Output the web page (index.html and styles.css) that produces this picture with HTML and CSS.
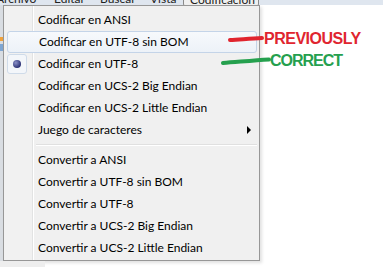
FILE: index.html
```html
<!DOCTYPE html>
<html>
<head>
  <link rel="stylesheet" href="styles.css">
</head>
<body>

  <div class="menubar">
    <span class="bar-item file">Archivo</span>
    <span class="bar-item edit">Editar</span>
    <span class="bar-item search">Buscar</span>
    <span class="bar-item view">Vista</span>
    <span class="bar-item active">Codificación</span>
  </div>

  <div class="workspace">
    <div class="side-strip">
      <div class="tool orange"></div>
      <div class="tool blue"></div>
    </div>

    <div class="menu">
      <div class="menu-item">Codificar en ANSI</div>
      <div class="menu-item hover">Codificar en UTF-8 sin BOM</div>
      <div class="menu-item checked">
        <span class="radio"><span class="dot"></span></span>
        Codificar en UTF-8
      </div>
      <div class="menu-item">Codificar en UCS-2 Big Endian</div>
      <div class="menu-item">Codificar en UCS-2 Little Endian</div>
      <div class="menu-item submenu">Juego de caracteres <span class="arrow"></span></div>
      <div class="separator"></div>
      <div class="menu-item">Convertir a ANSI</div>
      <div class="menu-item">Convertir a UTF-8 sin BOM</div>
      <div class="menu-item">Convertir a UTF-8</div>
      <div class="menu-item">Convertir a UCS-2 Big Endian</div>
      <div class="menu-item">Convertir a UCS-2 Little Endian</div>
    </div>
  </div>

  <div class="footer">
    <div class="footer-left"></div>
  </div>

  <!-- hand drawn notes over the screenshot -->
  <div class="note note-red">
    <svg width="36" height="8" viewBox="0 0 36 8">
      <path d="M2 5 C 12 4.5, 22 3.5, 34 3" stroke="#e0252f" stroke-width="4" stroke-linecap="round" fill="none"/>
    </svg>
    <span class="note-text">PREVIOUSLY</span>
  </div>
  <div class="note note-green">
    <svg width="50" height="8" viewBox="0 0 50 8">
      <path d="M2 6 C 16 5, 32 3.5, 48 2.5" stroke="#25a04e" stroke-width="4" stroke-linecap="round" fill="none"/>
    </svg>
    <span class="note-text">CORRECT</span>
  </div>

</body>
</html>
```

FILE: styles.css
```css
body {
  margin: 0;
  width: 383px;
  height: 267px;
  background: #ffffff;
  font-family: Lato, 'Liberation Sans', sans-serif;
  font-size: 12px;
  color: #000;
  position: relative;
  overflow: hidden;
}

.menubar {
  height: 5px;
  overflow: hidden;
  background: #dfe6ef;
  display: flex;
  white-space: nowrap;
}

.bar-item {
  flex: none;
  margin-top: -9px;
  line-height: 16px;
  color: #222;
}

.bar-item.file {
  margin-left: -4px;
  width: 58px;
}

.bar-item.edit {
  width: 46px;
}

.bar-item.search {
  width: 50px;
}

.bar-item.view {
  width: 33px;
}

.bar-item.active {
  box-sizing: border-box;
  width: 76px;
  padding: 0 6px;
  height: 16px;
  border: 1px solid #8a8a8a;
  border-radius: 3px;
  background: #f0f0f0;
}

.workspace {
  display: flex;
  height: 256px;
}

.side-strip {
  width: 3px;
  background: #d9dde2;
  display: flex;
  flex-direction: column;
  padding-top: 32px;
  gap: 3px;
}

.tool {
  height: 4px;
}

.tool.orange {
  background: #f0a23c;
}

.tool.blue {
  height: 7px;
  background: #7fa6d2;
}

.menu {
  width: 251px;
  padding: 3px 2px 1px 2px;
  border: 1px solid #979797;
  background: #f0f0f0;
  background-image: linear-gradient(to right, #f1f1f1 28px, #e2e3e3 28px, #e2e3e3 29px, #ffffff 29px, #ffffff 30px, #f0f0f0 30px);
  box-shadow: 2px 2px 3px rgba(0, 0, 0, 0.12);
}

.menu-item {
  height: 22px;
  line-height: 22px;
  padding-left: 32px;
  position: relative;
  white-space: nowrap;
}

.menu-item.hover {
  margin-left: 1px;
  height: 20px;
  line-height: 20px;
  padding-left: 31px;
  border: 1px solid #c4d4e8;
  border-radius: 3px;
  background: linear-gradient(#f7f9fc, #edf2f8);
}

.radio {
  position: absolute;
  left: 1px;
  top: 1px;
  width: 18px;
  height: 18px;
  border: 1px solid #cfdbe9;
  border-radius: 3px;
  background: #f3f6fa;
  display: flex;
  align-items: center;
  justify-content: center;
}

.dot {
  width: 8px;
  height: 8px;
  border-radius: 50%;
  background: radial-gradient(circle at 35% 35%, #8a90c8, #2c3275 70%);
}

.arrow {
  position: absolute;
  left: 241px;
  top: 7px;
  width: 0;
  height: 0;
  border-top: 4px solid transparent;
  border-bottom: 4px solid transparent;
  border-left: 4px solid #000;
}

.separator {
  height: 8px;
  margin-left: 30px;
  display: flex;
  flex-direction: column;
  justify-content: center;
}

.separator::before {
  content: "";
  height: 1px;
  background: #e0e0e0;
  border-bottom: 1px solid #ffffff;
}

.footer {
  height: 6px;
  display: flex;
}

.footer-left {
  width: 45px;
  background: #eeeeee;
}

.note {
  position: absolute;
  display: flex;
  align-items: center;
}

.note-text {
  font-family: 'Liberation Sans', Arial, sans-serif;
  font-weight: bold;
  font-size: 16px;
}

.note-red {
  left: 228px;
  top: 30px;
}

.note-red .note-text {
  color: #e0252f;
  letter-spacing: -0.5px;
}

.note-green {
  left: 221px;
  top: 52px;
}

.note-green .note-text {
  color: #25a04e;
  letter-spacing: -1px;
  margin-left: -1px;
}
```
